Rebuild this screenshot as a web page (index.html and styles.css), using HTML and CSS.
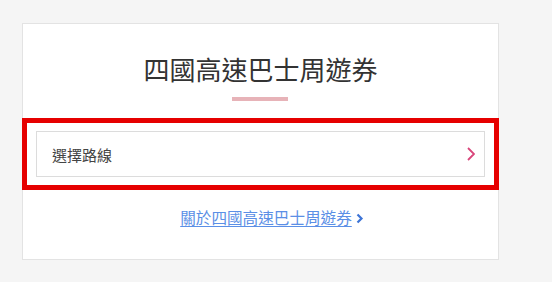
FILE: index.html
```html
<!DOCTYPE html>
<html lang="zh-Hant">
<head>
    <meta charset="UTF-8">
    <title>四國高速巴士周遊券</title>
    <link rel="stylesheet" href="styles.css">
</head>
<body>
    <div class="card">
        <h1 class="title">四國高速巴士周遊券</h1>
        <div class="title-bar"></div>
        <div class="route-area">
            <div class="route-select">
                <span>選擇路線</span>
                <svg class="chevron" width="8" height="14" viewBox="0 0 8 14">
                    <path d="M1 1 L7 7 L1 13" fill="none" stroke="#d9457a" stroke-width="1.8"/>
                </svg>
            </div>
        </div>
        <div class="about">
            <a href="#" class="about-link">關於四國高速巴士周遊券</a>
            <svg class="about-arrow" width="8" height="11" viewBox="0 0 8 11">
                <path d="M1.5 1.5 L5.5 5.5 L1.5 9.5" fill="none" stroke="#3d74d6" stroke-width="2.2"/>
            </svg>
        </div>
    </div>
</body>
</html>
```

FILE: styles.css
```css
body {
    margin: 0;
    padding: 23px 22px;
    background-color: #f5f5f5;
    font-family: "Noto Sans CJK TC", "Noto Sans", sans-serif;
    color: #333;
}
.card {
    box-sizing: border-box;
    width: 477px;
    background-color: #fff;
    border: 1px solid #e3e3e3;
    padding: 27px 0 32px;
}
.title {
    margin: 0;
    font-size: 26px;
    line-height: 36px;
    font-weight: 400;
    text-align: center;
    color: #333;
}
.title-bar {
    width: 56px;
    height: 4px;
    margin: 10px auto 17px;
    margin-left: 209px;
    background-color: #e7b3b8;
}
.route-area {
    border: 5px solid #e60000;
    margin: 0 -1px;
    padding: 8px 9px;
}
.route-select {
    display: flex;
    align-items: center;
    justify-content: space-between;
    height: 46px;
    box-sizing: border-box;
    border: 1px solid #dcdcdc;
    padding: 0 9px 0 15px;
    font-size: 15px;
    color: #444;
}
.chevron {
    display: block;
}
.about {
    display: flex;
    align-items: center;
    justify-content: center;
    gap: 4px;
    margin-top: 17px;
    margin-left: 23px;
    line-height: 20px;
}
.about-link {
    font-size: 15.6px;
    color: #5b8fe6;
    text-decoration: underline;
    text-underline-offset: 2px;
}
.about-arrow {
    display: block;
    margin-top: 3px;
}
```
